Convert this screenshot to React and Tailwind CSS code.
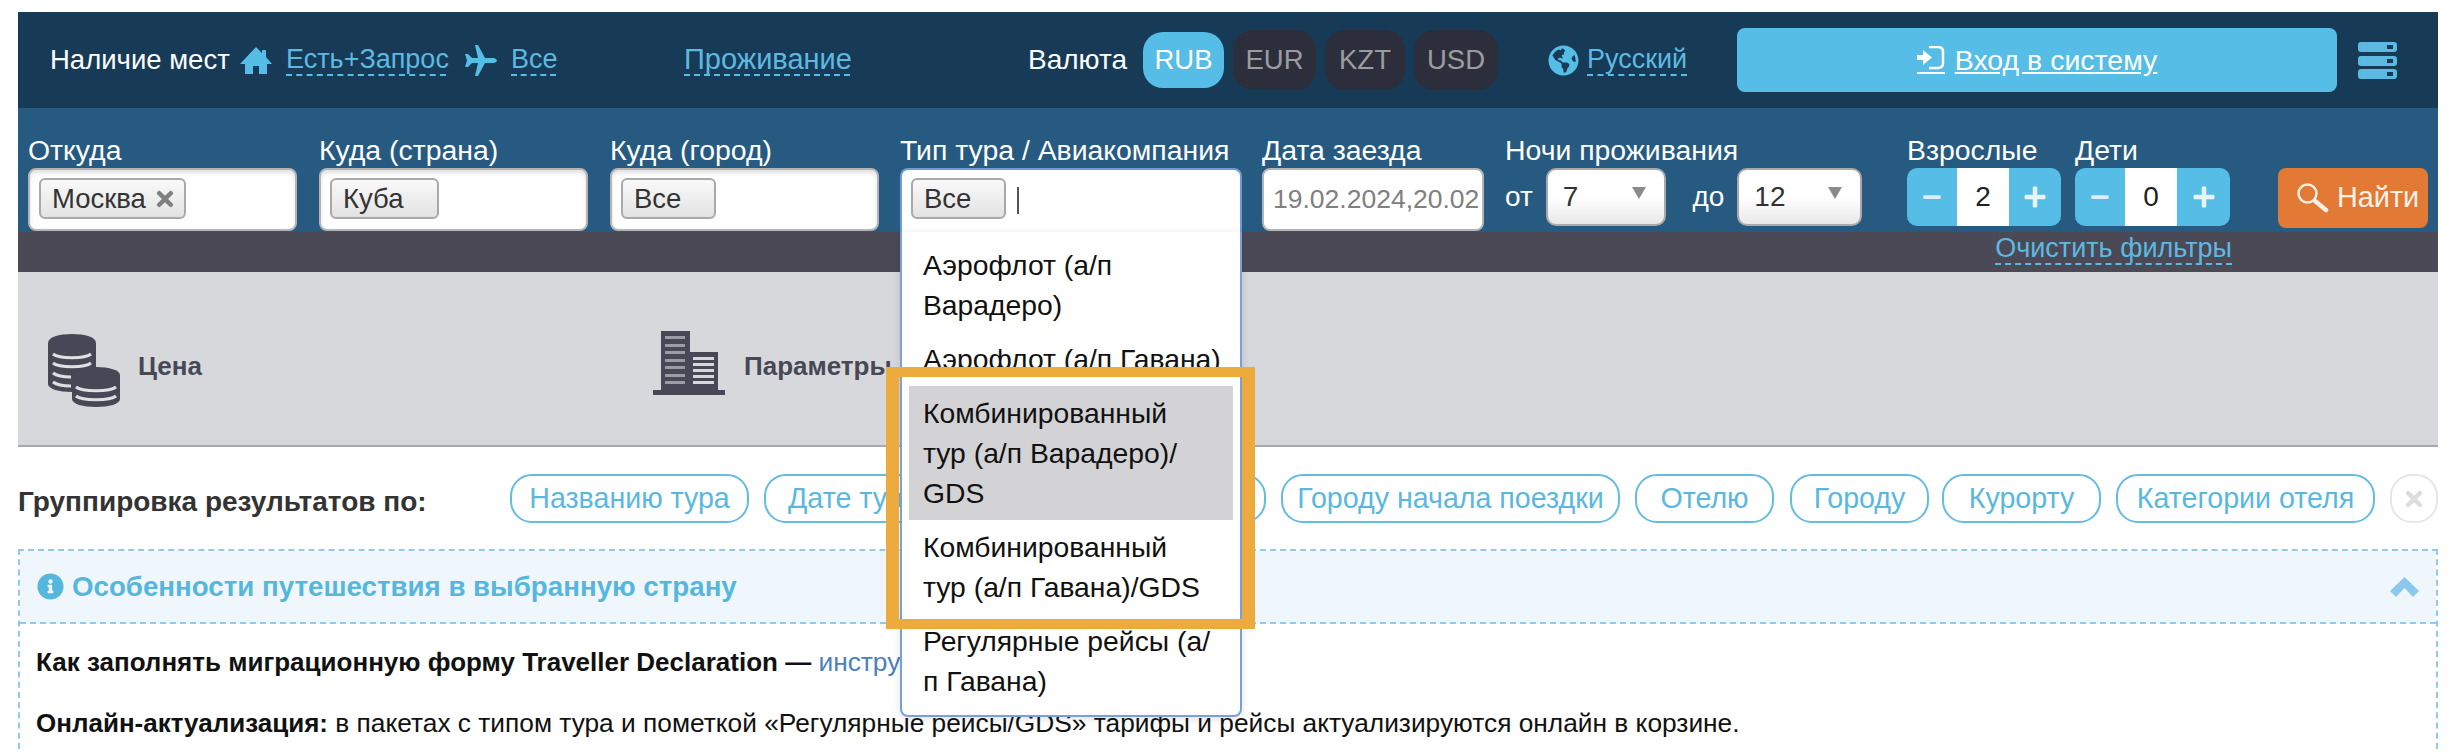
import React from 'react';
import { FaGlobeAmericas, FaInfoCircle, FaTimes, FaPlus, FaMinus } from 'react-icons/fa';

const Dashed = ({ className = '', children }) => (
    <span className={`inline-block border-b-2 border-dashed border-[#56bde6] text-[#5db9e2] leading-[30px] whitespace-nowrap ${className}`}>{children}</span>
);

const Currency = ({ label, active, className }) => (
    <div className={`flex items-center justify-center rounded-[20px] ${active ? 'h-[56px] bg-[#56bde6] text-white' : 'h-[60px] bg-[#2d2e3c] text-[#9c9c9c]'} ${className}`}>{label}</div>
);

const Tag = ({ width, children, remove }) => (
    <div className={`flex items-center h-[41px] pl-[11px] rounded-[6px] border-2 border-[#a9a9a9] bg-gradient-to-b from-[#f9f9f9] to-[#e3e3e3] text-[#333] text-[27.5px] ${width}`}>
        {children}
        {remove && <FaTimes className="ml-[7px] text-[#808080]" size={24} />}
    </div>
);

const FieldBox = ({ tag, width, remove, tagWidth }) => (
    <div className={`h-[63px] pt-[8px] pl-[9px] bg-white rounded-[8px] border-2 border-[#b4b4b4] shadow-[inset_0_3px_4px_rgba(0,0,0,0.12)] ${width}`}>
        <Tag width={tagWidth} remove={remove}>{tag}</Tag>
    </div>
);

const Select = ({ value, width }) => (
    <div className={`relative flex items-center h-[58px] pl-[15px] rounded-[10px] border-2 border-[#a9a9a9] bg-gradient-to-b from-white from-50% to-[#e8e8e8] text-[#333] ${width}`}>
        {value}
        <svg className="absolute right-[18px] top-[17px]" width="14" height="12" viewBox="0 0 14 12"><path d="M0 0h14L7 12z" fill="#8a8a8a" /></svg>
    </div>
);

const Stepper = ({ value, width }) => (
    <div className={`flex h-[58px] rounded-[10px] overflow-hidden bg-[#56bde6] ${width}`}>
        <div className="flex w-[50px] items-center justify-center text-[#d9eef8]"><FaMinus size={20} /></div>
        <div className="flex w-[52px] items-center justify-center bg-white text-[#222]">{value}</div>
        <div className="flex flex-1 items-center justify-center text-[#e6f4fb]"><FaPlus size={24} /></div>
    </div>
);

const Chip = ({ className, children }) => (
    <div className={`flex h-[49px] shrink-0 items-center justify-center rounded-[22px] border-2 border-[#63bde0] text-[#5ab8e0] text-[28.6px] whitespace-nowrap overflow-hidden ${className}`}>{children}</div>
);

const Label = ({ children }) => (
    <div className="h-[33px] text-white text-[28.4px] leading-[30px] whitespace-nowrap">{children}</div>
);

const DropItem = ({ lines, active }) => (
    <div className={`px-[14px] py-[7px] text-[28.3px] leading-[40px] text-[#111] ${active ? 'bg-[#d3d3d5]' : ''}`}>
        {lines.map((l) => <div key={l} className="whitespace-nowrap">{l}</div>)}
    </div>
);

const HomeIcon = () => (
    <svg className="shrink-0" width="32" height="27" viewBox="0 0 32 27" fill="#56bde6">
        <path d="M16 0l6 6V3h4v7l6 7h-5v10h-8v-8h-6v8H5V17H0z" />
    </svg>
);

const PlaneIcon = () => (
    <svg className="ml-[19px] shrink-0" width="32" height="31" viewBox="0 0 32 31" fill="#56bde6">
        <path d="M32 15.500Q32 14 29 13H20L13 0H10L13 13H7L3 9H0L2 15.500L0 22H3L7 18H13L10 31H13L20 18H29Q32 17 32 15.500Z" />
    </svg>
);

const LoginIcon = () => (
    <svg className="shrink-0" width="28" height="28" viewBox="0 0 28 28" fill="none">
        <path d="M0 9h6V4l9 7.500-9 7.500v-5H0z" fill="#fff" />
        <path d="M12 1h9q5 0 5 5v11q0 5-5 5h-9" stroke="#fff" strokeWidth="2.500" />
        <rect x="0" y="26" width="28" height="2" fill="#fff" />
    </svg>
);

const ChevronIcon = () => (
    <svg className="ml-auto shrink-0" width="29" height="20" viewBox="0 0 29 20" fill="#8cc8ee">
        <path d="M14.500 0L29 14l-6 6-8.500-9L6 20l-6-6z" />
    </svg>
);

const CoinsIcon = () => (
    <svg className="shrink-0" width="72" height="73" viewBox="0 0 72 73" fill="#474855">
        <path d="M0 9C0 3 11 0 24 0s24 3 24 9v41c0 5-11 8-24 8S0 55 0 50z" />
        <g fill="none" stroke="#dfe0e3" strokeWidth="3">
            <path d="M5 20c6 5 32 5 38 0" />
            <path d="M5 29c6 5 32 5 38 0" />
            <path d="M5 39c4 3 12 4 18 4" />
            <path d="M5 48c4 3 12 4 18 4" />
        </g>
        <path d="M24 41c0-5 11-8 24-8s24 3 24 8v24c0 5-11 8-24 8s-24-3-24-8z" />
        <path d="M28 53c6 5 34 5 40 0M28 62c6 5 34 5 40 0" fill="none" stroke="#dfe0e3" strokeWidth="3" />
    </svg>
);

const BuildingIcon = () => (
    <svg className="shrink-0" width="72" height="64" viewBox="0 0 72 64" fill="#474855">
        <rect x="8" y="0" width="29" height="60" />
        <rect x="36" y="21" width="29" height="39" />
        <rect x="0" y="59" width="72" height="5" />
        <g fill="#9a9ba4">
            {[5, 13, 20, 28, 35, 43, 50].map((y) => <rect key={y} x="12" y={y} width="20" height="3" />)}
        </g>
        <g fill="#d7d8dc">
            {[26, 32, 38, 44, 50].map((y) => <rect key={y} x="40" y={y} width="21" height="3" />)}
        </g>
    </svg>
);

const ServerIcon = () => (
    <svg className="shrink-0" width="39" height="37" viewBox="0 0 39 37">
        {[0, 14, 27].map((y) => (
            <g key={y}>
                <rect x="0" y={y} width="39" height="10" rx="3" fill="#5db9e2" />
                <rect x="29" y={y + 3} width="6" height="4" fill="#173a56" />
            </g>
        ))}
    </svg>
);

const SearchIcon = () => (
    <svg className="shrink-0" width="32" height="30" viewBox="0 0 32 30" fill="none">
        <circle cx="10.500" cy="10.500" r="9" stroke="#fdeee3" strokeWidth="2.500" />
        <path d="M18 18l11 9" stroke="#fdeee3" strokeWidth="4.500" strokeLinecap="round" />
    </svg>
);

export default function App() {
    return (
        <div className="min-h-[756px] bg-white pt-[12px] font-['Liberation_Sans',Arial,sans-serif] text-[28px]">
            <div className="relative ml-[18px] w-[2420px] h-[744px] overflow-hidden">
                {/* Верхняя панель */}
                <div className="flex h-[96px] items-center bg-[#173a56] pl-[32px]">
                    <span className="w-[190px] text-[27.5px] text-white whitespace-nowrap">Наличие мест</span>
                    <HomeIcon />
                    <Dashed className="ml-[14px] w-[160px] text-[27px]">Есть+Запрос</Dashed>
                    <PlaneIcon />
                    <Dashed className="ml-[14px] w-[45px] text-[27px]">Все</Dashed>
                    <Dashed className="ml-[128px] w-[166px] text-[29px]">Проживание</Dashed>
                    <span className="ml-[178px] w-[98px] text-white whitespace-nowrap">Валюта</span>
                    <Currency label="RUB" active className="ml-[17px] w-[81px] text-[27.5px]" />
                    <Currency label="EUR" className="ml-[9px] w-[83px] text-[27.5px]" />
                    <Currency label="KZT" className="ml-[9px] w-[80px] text-[27.5px]" />
                    <Currency label="USD" className="ml-[9px] w-[84px] text-[27.5px]" />
                    <FaGlobeAmericas className="ml-[50px] shrink-0 text-[#56bde6]" size={31} />
                    <Dashed className="ml-[8px] w-[100px] text-[27px]">Русский</Dashed>
                    <div className="ml-[50px] flex h-[64px] w-[600px] items-center justify-center rounded-[8px] bg-[#56bde6] text-[28.5px] text-white">
                        <LoginIcon />
                        <span className="ml-[10px] underline">Вход в систему</span>
                    </div>
                    <div className="ml-[21px]"><ServerIcon /></div>
                </div>

                {/* Фильтры */}
                <div className="flex h-[124px] bg-[#265a80] pl-[10px] pt-[27px]">
                    <div className="w-[269px]">
                        <Label>Откуда</Label>
                        <FieldBox width="w-[269px]" tag="Москва" tagWidth="w-[147px]" remove />
                    </div>
                    <div className="ml-[22px] w-[269px]">
                        <Label>Куда (страна)</Label>
                        <FieldBox width="w-[269px]" tag="Куба" tagWidth="w-[109px]" />
                    </div>
                    <div className="ml-[22px] w-[269px]">
                        <Label>Куда (город)</Label>
                        <FieldBox width="w-[269px]" tag="Все" tagWidth="w-[95px]" />
                    </div>
                    <div className="ml-[21px] w-[342px]">
                        <Label>Тип тура / Авиакомпания</Label>
                        <div className="flex h-[64px] pt-[8px] pl-[9px] bg-white rounded-t-[8px] border-2 border-b-0 border-[#6f9ad6]">
                            <Tag width="w-[95px]">Все</Tag>
                            <div className="ml-[11px] mt-[9px] h-[27px] w-[2px] bg-[#555]" />
                        </div>
                    </div>
                    <div className="ml-[20px] w-[222px]">
                        <Label>Дата заезда</Label>
                        <div className="flex h-[63px] items-center pl-[9px] bg-white rounded-[8px] border-2 border-[#b4b4b4] text-[26.5px] text-[#808080] whitespace-nowrap overflow-hidden">19.02.2024,20.02</div>
                    </div>
                    <div className="ml-[21px] w-[357px]">
                        <Label>Ночи проживания</Label>
                        <div className="flex items-center text-white">
                            <span className="w-[41px]">от</span>
                            <Select value="7" width="w-[120px]" />
                            <span className="ml-[27px] w-[45px]">до</span>
                            <Select value="12" width="w-[125px]" />
                        </div>
                    </div>
                    <div className="ml-[45px] w-[154px]">
                        <Label>Взрослые</Label>
                        <Stepper value="2" width="w-[154px]" />
                    </div>
                    <div className="ml-[14px] w-[155px]">
                        <Label>Дети</Label>
                        <Stepper value="0" width="w-[155px]" />
                    </div>
                    <div className="ml-[48px] mt-[33px] flex h-[60px] w-[150px] items-center rounded-[8px] bg-[#e27935] pl-[19px] text-[28.8px] text-[#fdf1e8]">
                        <SearchIcon />
                        <span className="ml-[8px]">Найти</span>
                    </div>
                </div>

                <div className="flex h-[40px] justify-end bg-[#4a4955] pr-[206px]">
                    <span className="h-[33px] border-b-2 border-dashed border-[#5db9e2] text-[27px] text-[#5db9e2] leading-[32px] whitespace-nowrap">Очистить фильтры</span>
                </div>

                {/* Сортировка */}
                <div className="flex h-[175px] items-center border-b-2 border-[#a9a9a9] bg-[#d7d8dc] pl-[30px] pt-[24px]">
                    <div className="flex w-[605px] items-center">
                        <CoinsIcon />
                        <span className="ml-[18px] mb-[8px] text-[26px] font-bold text-[#474855]">Цена</span>
                    </div>
                    <div className="mb-[16px]"><BuildingIcon /></div>
                    <span className="ml-[19px] mb-[8px] text-[26px] font-bold text-[#474855]">Параметры</span>
                </div>

                {/* Группировка */}
                <div className="flex h-[102px] pt-[27px]">
                    <div className="flex h-[49px] w-[492px] shrink-0 items-center pt-[6px] font-bold text-[#333] whitespace-nowrap">Группировка результатов по:</div>
                    <Chip className="w-[239px]">Названию тура</Chip>
                    <Chip className="ml-[15px] w-[205px] justify-start pl-[22px]">Дате тура</Chip>
                    <Chip className="ml-[14px] w-[283px]">Авиакомпании</Chip>
                    <Chip className="ml-[15px] w-[339px]">Городу начала поездки</Chip>
                    <Chip className="ml-[15px] w-[139px]">Отелю</Chip>
                    <Chip className="ml-[16px] w-[139px]">Городу</Chip>
                    <Chip className="ml-[13px] w-[159px]">Курорту</Chip>
                    <Chip className="ml-[15px] w-[259px]">Категории отеля</Chip>
                    <div className="ml-[15px] flex h-[49px] w-[48px] shrink-0 items-center justify-center rounded-[22px] border-2 border-[#e6e6e8] text-[#dcdde0]"><FaTimes size={24} /></div>
                </div>

                {/* Особенности */}
                <div className="h-[200px] border-x-2 border-t-2 border-dashed border-[#93c9ea]">
                    <div className="flex h-[73px] items-center border-b-2 border-dashed border-[#93c9ea] bg-[#f0f7fc] pl-[17px] pr-[17px]">
                        <FaInfoCircle className="shrink-0 text-[#56b7de]" size={27} />
                        <span className="ml-[8px] text-[27.7px] font-bold text-[#56b7de]">Особенности путешествия в выбранную страну</span>
                        <ChevronIcon />
                    </div>
                    <div className="pl-[16px] text-[26.3px] text-[#111]">
                        <p className="mt-[23px] leading-[30px] whitespace-nowrap"><b className="text-[26px]">Как заполнять миграционную форму Traveller Declaration —</b> <span className="text-[#4a7fc1]">инструкция</span></p>
                        <p className="mt-[31px] leading-[30px] whitespace-nowrap"><b className="text-[26px]">Онлайн-актуализация:</b> в пакетах с типом тура и пометкой «Регулярные рейсы/GDS» тарифы и рейсы актуализируются онлайн в корзине.</p>
                    </div>
                </div>

                {/* Открытый список */}
                <div className="absolute left-[882px] top-[220px] h-[485px] w-[342px] rounded-b-[8px] border-2 border-t-0 border-[#7b9fd8] bg-white px-[7px] pt-[6px] shadow-[0_2px_8px_rgba(0,0,0,0.12)]">
                    <DropItem lines={['Аэрофлот (а/п', 'Варадеро)']} />
                    <DropItem lines={['Аэрофлот (а/п Гавана)']} />
                    <DropItem active lines={['Комбинированный', 'тур (а/п Варадеро)/', 'GDS']} />
                    <DropItem lines={['Комбинированный', 'тур (а/п Гавана)/GDS']} />
                    <DropItem lines={['Регулярные рейсы (а/', 'п Гавана)']} />
                </div>

                {/* Выделение на скриншоте */}
                <div className="absolute left-[868px] top-[355px] h-[262px] w-[369px] border-x-[13px] border-y-[10px] border-[#eeab3d]" />
            </div>
        </div>
    );
}
